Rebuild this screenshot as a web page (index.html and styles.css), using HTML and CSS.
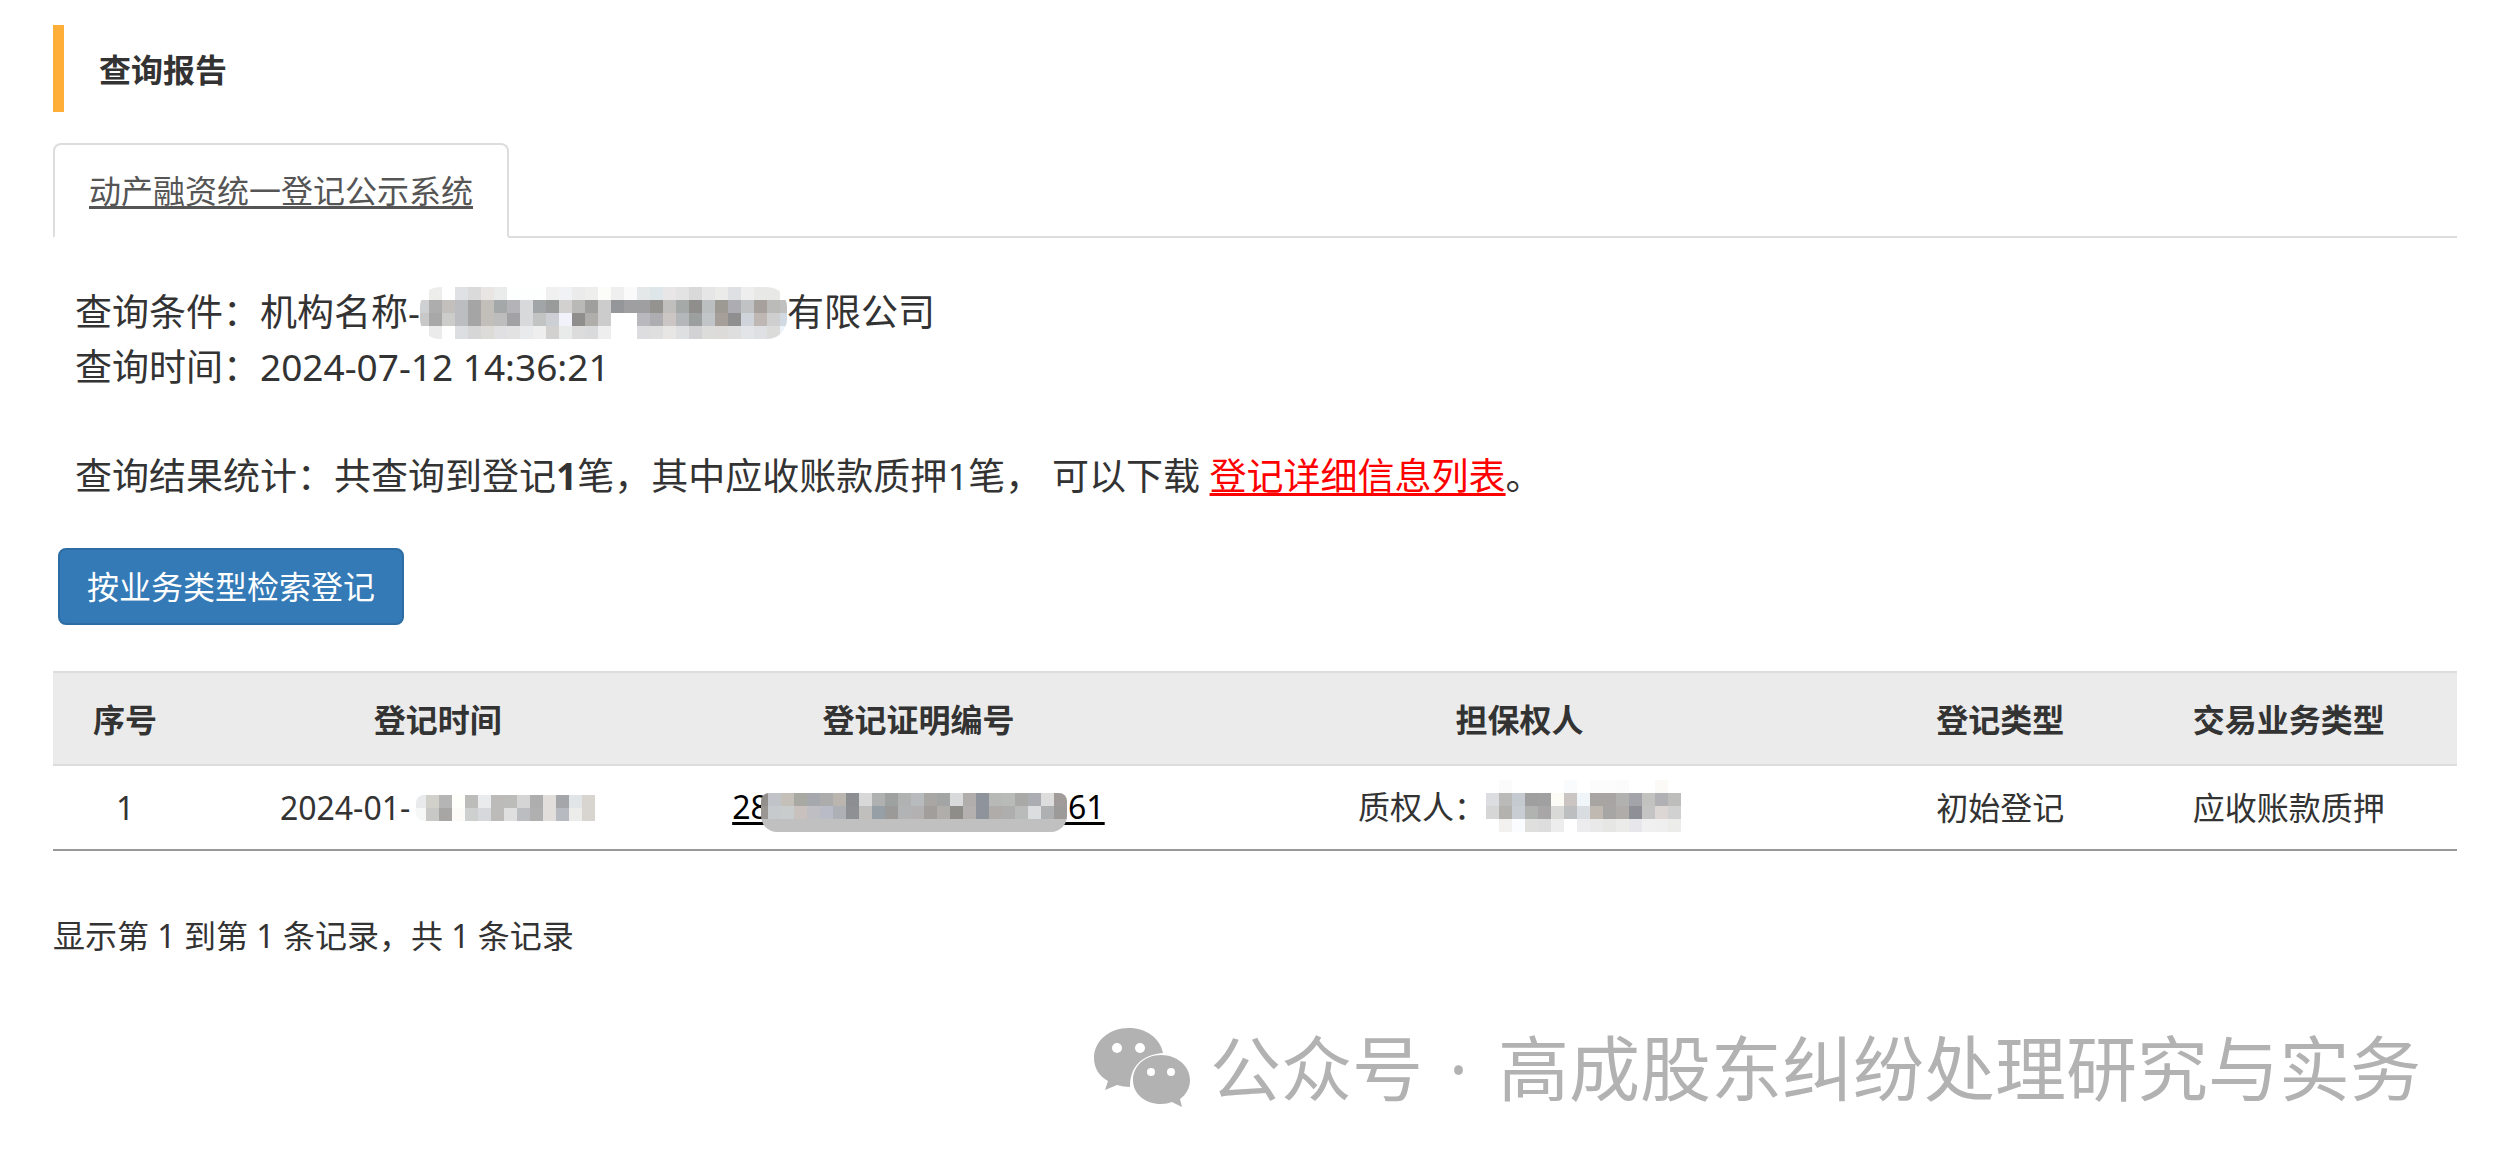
FILE: index.html
```html
<!DOCTYPE html>
<html lang="zh-CN">
<head>
  <meta charset="UTF-8">
  <meta name="viewport" content="width=device-width, initial-scale=1.0">
  <title>查询报告</title>
  <link rel="stylesheet" href="styles.css">
</head>
<body>
  <main class="report">
    <h1 class="report-title">查询报告</h1>

    <nav class="tabs">
      <a href="#result" class="tab active">动产融资统一登记公示系统</a>
    </nav>

    <section id="result" class="summary">
      <p>查询条件：机构名称-<svg class="mosaic mosaic-name" viewBox="4 0 367 52" data-mosaic="name"></svg>有限公司</p>
      <p>查询时间：2024-07-12 14:36:21</p>
      <p class="summary-total">查询结果统计：共查询到登记<b>1</b>笔，其中应收账款质押1笔， 可以下载 <a href="#list" class="download-link">登记详细信息列表</a>。</p>
    </section>

    <button type="button" class="btn">按业务类型检索登记</button>

    <table id="list" class="table">
      <colgroup>
        <col class="col-index">
        <col class="col-time">
        <col class="col-number">
        <col class="col-holder">
        <col class="col-type">
        <col class="col-business">
      </colgroup>
      <thead>
        <tr>
          <th>序号</th>
          <th>登记时间</th>
          <th>登记证明编号</th>
          <th>担保权人</th>
          <th>登记类型</th>
          <th>交易业务类型</th>
        </tr>
      </thead>
      <tbody>
        <tr>
          <td>1</td>
          <td>2024-01-<svg class="mosaic mosaic-time" viewBox="3 0 179 26" data-mosaic="time"></svg></td>
          <td><a href="#detail" class="number-link">28<svg class="mosaic mosaic-number" viewBox="6 0 306 39" data-mosaic="number"></svg>361</a></td>
          <td>质权人：<svg class="mosaic mosaic-holder" viewBox="0 0 195 52" data-mosaic="holder"></svg></td>
          <td>初始登记</td>
          <td>应收账款质押</td>
        </tr>
      </tbody>
    </table>

    <p class="table-info">显示第 1 到第 1 条记录，共 1 条记录</p>

    <footer class="account">
      <svg class="account-icon" viewBox="0 0 98 80">
        <path fill="#b2b2b2" d="M35 0C15 0 0 13 0 30c0 10 5 18 14 23l-3 9 12-5c4 1 9 2 13 2C36 40 46 27 69 25 66 10 52 0 35 0z"/>
        <path fill="#b2b2b2" d="M67 27c-16 0-28 11-28 25s12 24 28 24c4 0 8-1 11-2l10 5-2-8c6-4 10-11 10-19 0-14-13-25-29-25z"/>
        <circle cx="23" cy="20" r="5" fill="#fff"/>
        <circle cx="46" cy="20" r="5" fill="#fff"/>
        <circle cx="57" cy="44" r="4" fill="#fff"/>
        <circle cx="77" cy="44" r="4" fill="#fff"/>
      </svg>
      <span>公众号<span class="account-dot">·</span>高成股东纠纷处理研究与实务</span>
    </footer>
  </main>

  <script src="mosaic.js"></script>
</body>
</html>
```

FILE: styles.css
```css
:root {
  --text-color: #333;
  --border-color: #ddd;
  --primary-color: #337ab7;
  --primary-border: #2e6da4;
  --accent-color: #ffae38;
  --watermark-color: #b2b2b2;
}

* {
  box-sizing: border-box;
  margin: 0;
  padding: 0;
}

body {
  font-family: 'Noto Sans', 'Noto Sans CJK SC', sans-serif;
  font-size: 32px;
  line-height: 46px;
  color: var(--text-color);
  background-color: #fff;
}

.report {
  padding: 25px 42px 56px 53px;
}

.report-title {
  border-left: 11px solid var(--accent-color);
  padding: 22px 35px 19px;
  font-size: 32px;
  font-weight: 700;
}

.tabs {
  display: flex;
  margin-top: 31px;
  border-bottom: 2px solid var(--border-color);
}

.tab {
  margin-bottom: -2px;
  padding: 23px 34px 22px;
  border: 2px solid var(--border-color);
  border-bottom-color: #fff;
  border-radius: 8px 8px 0 0;
  color: #555;
}

a {
  text-decoration: underline;
  text-decoration-thickness: 3px;
  text-decoration-skip-ink: none;
  text-underline-offset: 3px;
}

.summary {
  padding: 46px 22px 0;
  font-size: 37px;
  line-height: 55px;
}

.summary-total {
  margin-top: 54px;
}

.download-link {
  color: #f00;
}

.btn {
  display: block;
  margin: 45px 5px 46px;
  padding: 14px 27px;
  border: 2px solid var(--primary-border);
  border-radius: 8px;
  background-color: var(--primary-color);
  color: #fff;
  font-family: inherit;
  font-size: 32px;
  line-height: 45px;
  cursor: pointer;
}

.table {
  width: 100%;
  table-layout: fixed;
  border-collapse: collapse;
  text-align: center;
}

.col-index {
  width: 6%;
}

.col-time,
.col-number {
  width: 20%;
}

.col-holder {
  width: 30%;
}

.col-type {
  width: 10%;
}

.col-business {
  width: 14%;
}

.table th {
  padding: 24px 16px 21px;
  border-top: 2px solid var(--border-color);
  border-bottom: 2px solid var(--border-color);
  background-color: #ebebeb;
}

.table td {
  padding: 18px 16px 17px;
  border-bottom: 2px solid #999;
  white-space: nowrap;
}

.number-link {
  color: #000;
}

.table-info {
  margin-top: 62px;
}

/* Закрашенные данные */
.mosaic {
  position: relative;
  margin-top: -20px;
  vertical-align: -13px;
  overflow: hidden;
  shape-rendering: crispEdges;
}

.mosaic-name {
  width: 367px;
  height: 52px;
  border-radius: 20px;
}

.mosaic-time {
  width: 179px;
  height: 26px;
  margin-left: 6px;
  vertical-align: -1px;
  border-radius: 8px 0 0 8px;
}

.mosaic-number {
  width: 306px;
  height: 39px;
  margin-left: -8px;
  margin-right: -17px;
  border-radius: 8px 8px 16px 16px;
}

.mosaic-holder {
  width: 195px;
  height: 52px;
}

.account {
  display: flex;
  align-items: center;
  justify-content: flex-end;
  gap: 18px;
  margin-top: 56px;
  padding-right: 36px;
  font-size: 71px;
  line-height: 106px;
  color: var(--watermark-color);
}

.account-icon {
  width: 98px;
  height: 80px;
}

.account-dot {
  padding: 0 30px 0 26px;
}
```

FILE: mosaic.js
```js
// Each row is a list of cell colours, "-" leaves the cell empty
const CELL = 13;

const mosaics = {
  name: [
    '- ededec - e0e1e4 dadada e8e5e2 e9ecea fcfffd fcfffd fcfffd f0f0f0 f1f2f6 ebebec eeeeec fcfcf8 efefef fafafa e5e8e8 dfe6ea e8e6e6 e3e3e3 d9d9d9 e6e6e6 ebebe9 dfe0e3 eeeeee e8e8e6 e8e8e6 -',
    'cfd0d1 adadad c2bfbc bcbdc1 a5a5a6 c2bfbb a5a8a8 b4b3b7 d7d9da a2a5a7 999a9a d3d1cf b9b9b7 9f9f9d cccccc 94969a 9f9fa2 9f9fa2 949390 c1bfbd a5aaa8 8f8e8c bcbfc0 9d9a94 adacb3 c0c2c4 a6a19c bbbbb9 c0c0c0',
    'c8c8c8 a8a8a8 cccccb bcbdc1 a5a5a6 c2bfbb bdbdbd a2a1a4 d7d9da c2c4c4 ccd0d4 f2f3fa 8f8e8c b0aeaa cccccc - - b8b8be aeaeb2 cbc6c3 b3b7ba 9b9f9e c1c5c8 a69f99 8f8f8f cfd4da beb7b3 cfcfcf d0d9e2',
    '- ebebeb - dcdee1 d6d6d6 dddbd8 e0e0e2 e2e2e2 e8eaec eeeeee d3d1cf e9eaea dcdcdc d8dadc eeeeee - - dddde0 dfdfe0 e8e6e4 dddfe0 d2d2d4 dcdcda dddbd9 dedede e3e4e8 dfe0e3 dbdbd9 eef3fa'
  ],
  time: [
    'e8eaec d1d0cb b5b5b5 fefefb bcbcba e9ebed bcbbba bcbcbb d5d5d5 aeaeae e1dedb a5a6a9 e1e5e8 d8d4d0',
    'f6f8f8 c8c8c7 a8a6a4 fcfbf8 cdd0cf d6d8db bcbbba dfdfdf bbbdc0 b0b0b0 e1dedb b7bbc1 ececea d8d4d0'
  ],
  number: [
    '928e8b c0c4c9 c5bfba a8a9a3 a5a9ae acacac bbb5b0 8b8f91 d8d8d8 aeb1af 9da19f b0b1b1 b8bbbd a9a7a4 a3a5a4 d9dadc b1adaa 8f939b b6b9b6 b9bbb9 a9a9a8 aaadb2 dedddd a19c99',
    '9a9693 c6cacd c8cccc c8c1be bfbfc3 b9bbc6 adb0b5 8f9094 c1bfbd 979fa6 9c9a99 b1b3b4 b3b1b2 a29e9b b0aeaa 8e8d8a b3b0af 8f939b b0acaa aeaeae b9bbba dcddde aeb0b1 9c9b99',
    Array(24).fill('c0c0c0').join(' ')
  ],
  holder: [
    '- fbfbfb - - - - fafbfd - fcfcfc fcfcfc fbfbfb - - fbfaf7 -',
    'dcdde0 babab8 c5c9d0 9f9f9f a0a0a0 fcfbf5 cac5c2 f0f5f9 a8a4a1 a8a4a1 b1b2af a2a4aa c2c2c0 b0b0b5 bdbdbb',
    'd6d6d7 b3b2ae c8ccd3 b1b3b1 a8a6a6 d9d9d7 bdbec0 d9dde1 bfb9b1 a8a6a5 b0acaa 8f9097 c4c4c4 dcd7d5 d1d1d1',
    '- f2f1ef fbfcff dfdfde dddddd ededed - ececef e9e9e9 e6e6e4 ebebea e7e7eb f0f0f0 efefef ececea'
  ]
};

document.querySelectorAll('[data-mosaic]').forEach(function(svg) {
  mosaics[svg.dataset.mosaic].forEach(function(row, y) {
    row.split(' ').forEach(function(color, x) {
      const rect = document.createElementNS('http://www.w3.org/2000/svg', 'rect');
      rect.setAttribute('x', x * CELL);
      rect.setAttribute('y', y * CELL);
      rect.setAttribute('width', CELL);
      rect.setAttribute('height', CELL);
      rect.setAttribute('fill', color === '-' ? '#fff' : '#' + color);
      svg.appendChild(rect);
    });
  });
});
```
